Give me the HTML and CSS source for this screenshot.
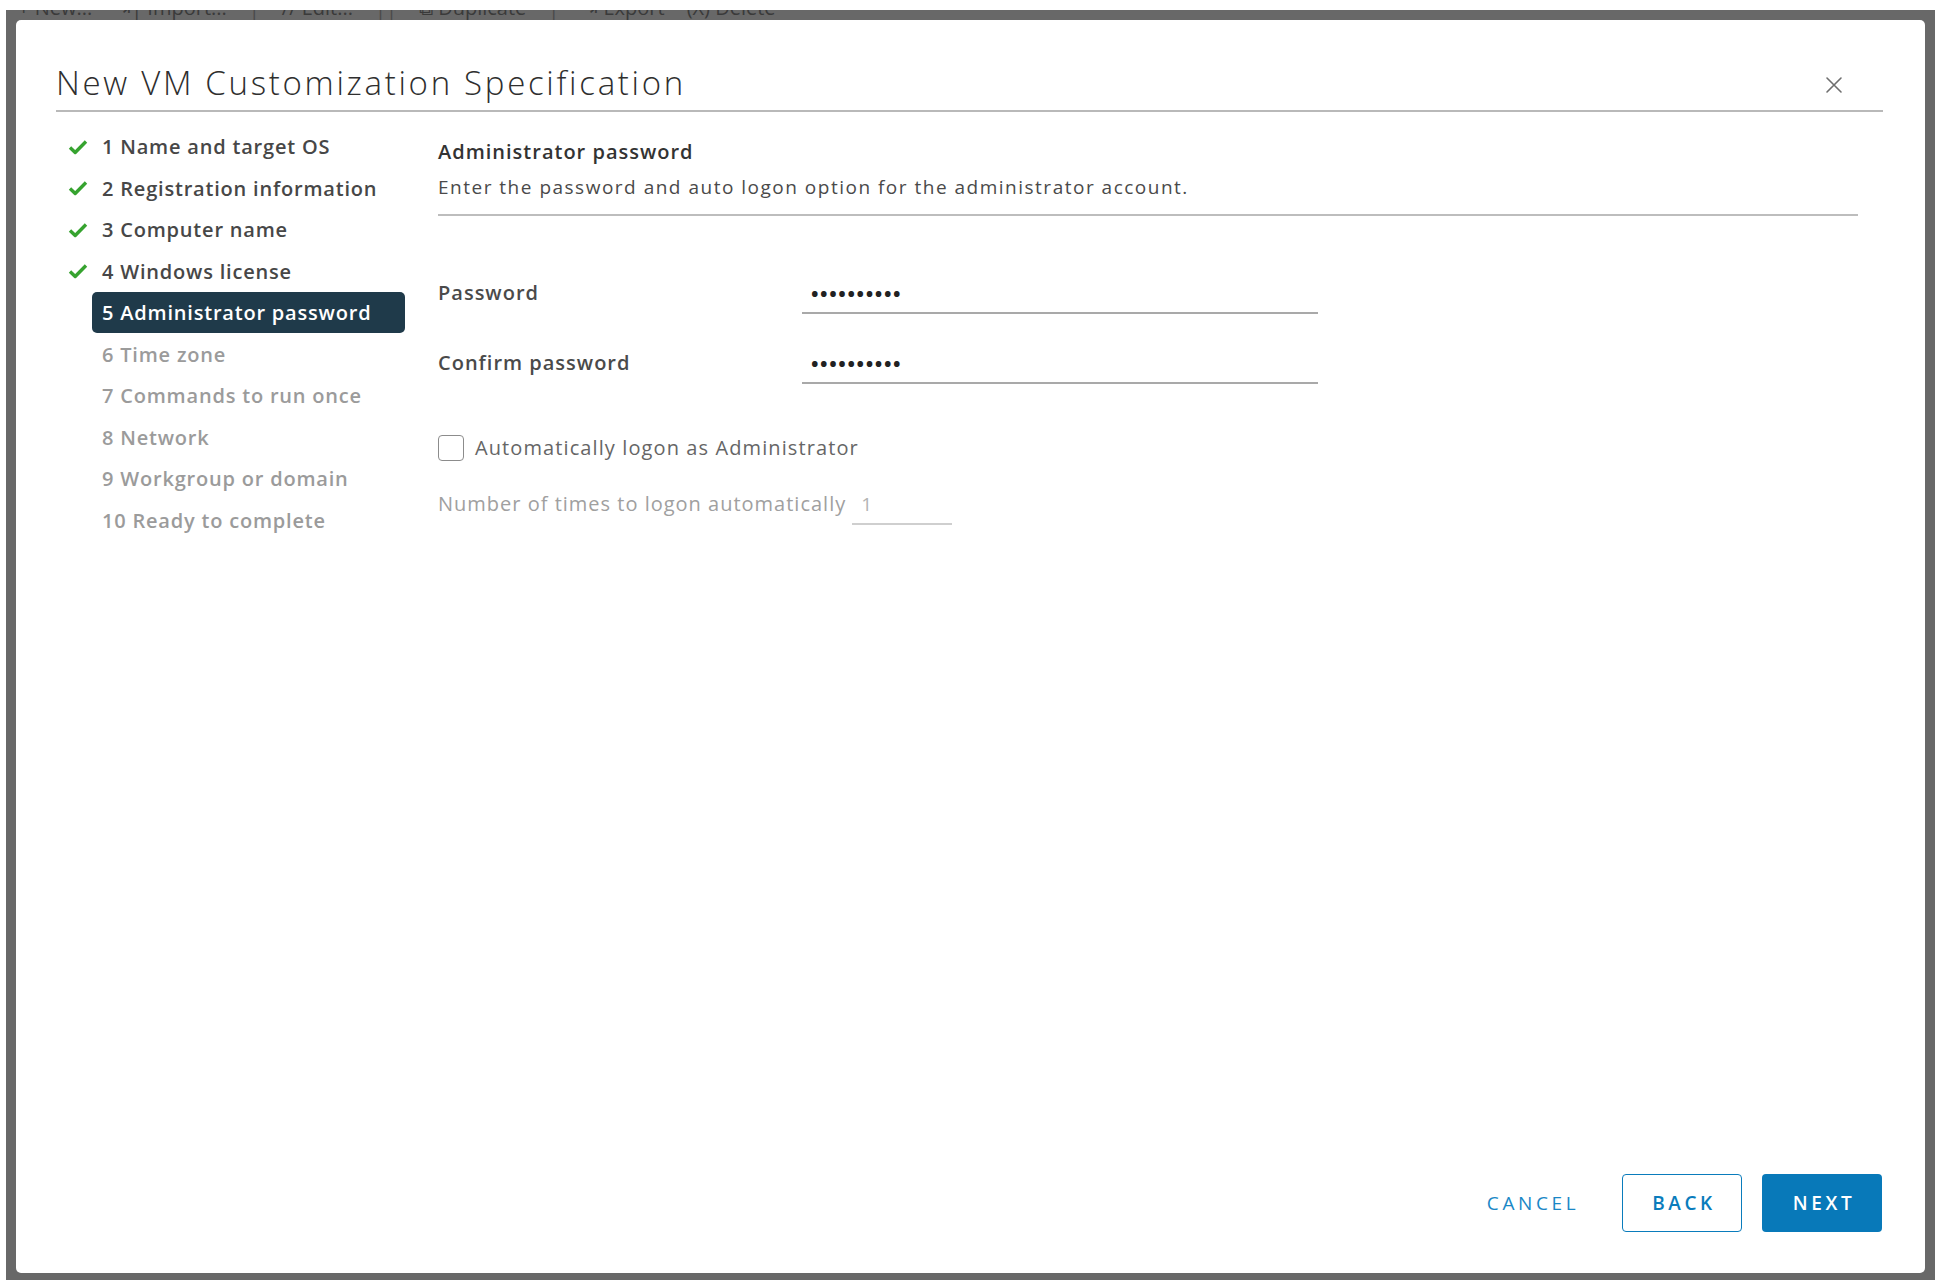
FILE: index.html
```html
<!DOCTYPE html>
<html lang="en">
<head>
<meta charset="utf-8">
<title>New VM Customization Specification</title>
<link rel="stylesheet" href="styles.css">
</head>
<body>
<div class="backdrop">
  <div class="peek">
    <div class="peek-row">
      <span>+ New...</span>
      <span>⇥| Import...</span>
      <span class="sep">|</span>
      <span>// Edit...</span>
      <span class="sep">||</span>
      <span>⧉ Duplicate</span>
      <span class="sep">|</span>
      <span>⇥ Export</span>
      <span>(X) Delete</span>
    </div>
  </div>
  <div class="modal">
    <div class="modal-header">
      <h1 class="title">New VM Customization Specification</h1>
      <button class="close" aria-label="Close">
        <svg width="18" height="18" viewBox="0 0 18 18"><path d="M2 2 L16 16 M16 2 L2 16" stroke="#6e6e6e" stroke-width="1.6" fill="none" stroke-linecap="round"/></svg>
      </button>
    </div>
    <div class="modal-body">
      <nav class="steps">
        <div class="step done"><span class="icon"><svg width="20" height="16" viewBox="0 0 20 16"><path d="M2 8.5 L7.2 13.5 L18 2.5" stroke="#36a32f" stroke-width="3.4" fill="none" stroke-linejoin="round"/></svg></span><span class="label">1 Name and target OS</span></div>
        <div class="step done"><span class="icon"><svg width="20" height="16" viewBox="0 0 20 16"><path d="M2 8.5 L7.2 13.5 L18 2.5" stroke="#36a32f" stroke-width="3.4" fill="none" stroke-linejoin="round"/></svg></span><span class="label">2 Registration information</span></div>
        <div class="step done"><span class="icon"><svg width="20" height="16" viewBox="0 0 20 16"><path d="M2 8.5 L7.2 13.5 L18 2.5" stroke="#36a32f" stroke-width="3.4" fill="none" stroke-linejoin="round"/></svg></span><span class="label">3 Computer name</span></div>
        <div class="step done"><span class="icon"><svg width="20" height="16" viewBox="0 0 20 16"><path d="M2 8.5 L7.2 13.5 L18 2.5" stroke="#36a32f" stroke-width="3.4" fill="none" stroke-linejoin="round"/></svg></span><span class="label">4 Windows license</span></div>
        <div class="step active"><span class="icon"></span><span class="label">5 Administrator password</span></div>
        <div class="step todo"><span class="icon"></span><span class="label">6 Time zone</span></div>
        <div class="step todo"><span class="icon"></span><span class="label">7 Commands to run once</span></div>
        <div class="step todo"><span class="icon"></span><span class="label">8 Network</span></div>
        <div class="step todo"><span class="icon"></span><span class="label">9 Workgroup or domain</span></div>
        <div class="step todo"><span class="icon"></span><span class="label">10 Ready to complete</span></div>
      </nav>
      <section class="content">
        <div class="section-head">
          <h2 class="section-title">Administrator password</h2>
          <p class="section-desc">Enter the password and auto logon option for the administrator account.</p>
        </div>
        <div class="field first">
          <span class="field-label">Password</span>
          <div class="input">••••••••••</div>
        </div>
        <div class="field">
          <span class="field-label">Confirm password</span>
          <div class="input">••••••••••</div>
        </div>
        <div class="check-row">
          <span class="checkbox"></span>
          <span class="check-label">Automatically logon as Administrator</span>
        </div>
        <div class="count-row">
          <span class="count-label">Number of times to logon automatically</span>
          <div class="count-input">1</div>
        </div>
      </section>
    </div>
    <div class="modal-footer">
      <button class="btn btn-link">CANCEL</button>
      <button class="btn btn-outline">BACK</button>
      <button class="btn btn-primary">NEXT</button>
    </div>
  </div>
</div>
</body>
</html>
```

FILE: styles.css
```css
* { box-sizing: border-box; }

html, body {
  margin: 0;
  padding: 0;
  background: #ffffff;
  width: 1944px;
  height: 1285px;
  overflow: hidden;
  font-family: "Open Sans", "Noto Sans", sans-serif;
}

.backdrop {
  margin: 10px 9px 0 6px;
  height: 1270px;
  padding: 0 10px 7px 10px;
  background: #686868;
  display: flex;
  flex-direction: column;
}

.peek {
  height: 10px;
  margin: 0 -10px;
  overflow: hidden;
  flex: none;
}

.peek-row {
  display: flex;
  gap: 22px;
  padding-left: 12px;
  margin-top: -14px;
  line-height: 24px;
  font-size: 20px;
  color: #3a3a3a;
  white-space: nowrap;
}

.peek-row .sep { color: #4a4a4a; }

.modal {
  flex: 1;
  background: #ffffff;
  border-radius: 5px;
  display: flex;
  flex-direction: column;
}

.modal-header {
  margin: 0 42px 0 40px;
  padding-top: 43px;
  padding-bottom: 7px;
  border-bottom: 2px solid #b9b9b9;
  display: flex;
  align-items: center;
  justify-content: space-between;
}

.title {
  margin: 0;
  font-weight: 300;
  font-size: 33px;
  line-height: 40px;
  letter-spacing: 2.7px;
  color: #2e2e2e;
}

.close {
  border: 0;
  background: transparent;
  padding: 0;
  margin: 4px 40px 0 0;
  width: 18px;
  height: 18px;
  display: flex;
}

.modal-body {
  flex: 1;
  display: flex;
}

.steps {
  width: 422px;
  padding: 14px 33px 0 52px;
  display: flex;
  flex-direction: column;
}

.step {
  height: 41.5px;
  display: flex;
  align-items: center;
}

.step .icon {
  width: 24px;
  height: 41.5px;
  display: flex;
  align-items: center;
  flex: none;
}

.step .label {
  flex: 1;
  height: 41px;
  line-height: 41px;
  padding-left: 10px;
  font-size: 20px;
  font-weight: 600;
  letter-spacing: 0.8px;
  border-radius: 5px;
  white-space: nowrap;
}

.step.done .label { color: #474747; }
.step.todo .label { color: #9b9b9b; }
.step.active .label {
  background: #1f3a4a;
  color: #ffffff;
}

.content {
  flex: 1;
  padding: 26px 67px 0 0;
}

.section-head {
  border-bottom: 2px solid #bdbdbd;
  padding-bottom: 13px;
}

.section-title {
  margin: 0;
  font-size: 20px;
  font-weight: 600;
  line-height: 28px;
  letter-spacing: 1px;
  color: #333333;
}

.section-desc {
  margin: 7px 0 0 0;
  font-size: 19px;
  font-weight: 400;
  line-height: 28px;
  letter-spacing: 1.5px;
  color: #4a4a4a;
}

.field {
  display: flex;
  align-items: flex-start;
  margin-top: 30px;
}

.field.first { margin-top: 58px; }

.field-label {
  width: 364px;
  flex: none;
  line-height: 38px;
  font-size: 20px;
  font-weight: 600;
  letter-spacing: 1px;
  color: #4a4a4a;
}

.input {
  width: 516px;
  height: 40px;
  line-height: 40px;
  padding-left: 9px;
  border-bottom: 2px solid #a9a9a9;
  font-size: 20px;
  font-weight: 700;
  letter-spacing: 1.6px;
  color: #222222;
}

.check-row {
  margin-top: 50px;
  display: flex;
  align-items: center;
  height: 28px;
}

.checkbox {
  width: 26px;
  height: 26px;
  border: 1.5px solid #8c8c8c;
  border-radius: 4px;
  flex: none;
}

.check-label {
  margin-left: 11px;
  font-size: 20px;
  letter-spacing: 1.1px;
  color: #666666;
  line-height: 28px;
}

.count-row {
  margin-top: 23px;
  display: flex;
  align-items: flex-start;
}

.count-label {
  line-height: 38px;
  font-size: 20px;
  letter-spacing: 1px;
  color: #a0a0a0;
}

.count-input {
  margin-left: 6px;
  width: 100px;
  height: 40px;
  line-height: 38px;
  padding-left: 9px;
  border-bottom: 2px solid #cfcfcf;
  font-size: 19px;
  color: #b3b3b3;
}

.modal-footer {
  display: flex;
  justify-content: flex-end;
  align-items: center;
  padding: 0 43px 41px 0;
}

.btn {
  height: 58px;
  width: 120px;
  border-radius: 4px;
  font-family: "Open Sans", "Noto Sans", sans-serif;
  font-size: 19px;
  font-weight: 600;
  letter-spacing: 3.6px;
  padding: 0 0 0 4px;
  cursor: pointer;
}

.btn-link {
  border: 0;
  background: transparent;
  color: #1a87c6;
  font-weight: 500;
  margin-right: 31px;
}

.btn-outline {
  border: 1.5px solid #0a7cbc;
  background: #ffffff;
  color: #0a7cbc;
  margin-right: 20px;
}

.btn-primary {
  border: 0;
  background: #0879b9;
  color: #ffffff;
}
```
